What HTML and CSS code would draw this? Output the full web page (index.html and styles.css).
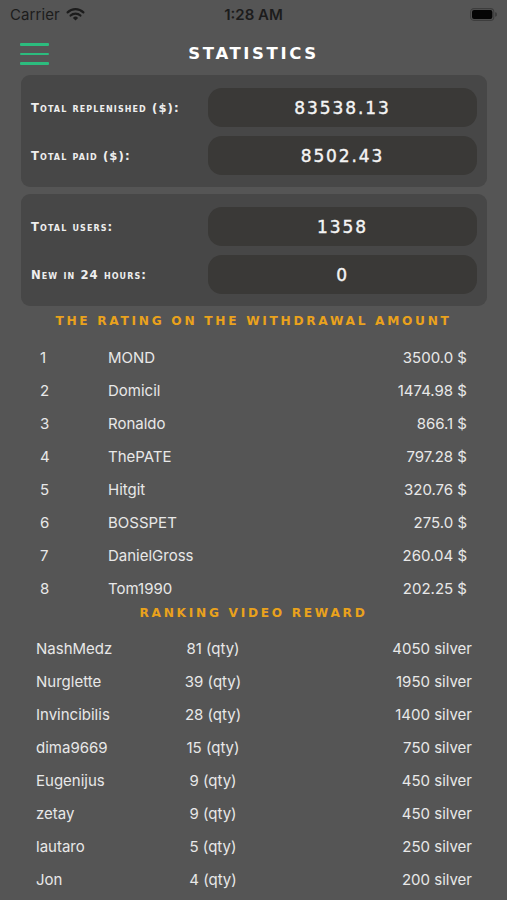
FILE: index.html
```html
<!DOCTYPE html>
<html>
<head>
<meta charset="utf-8">
<title>Statistics</title>
<link rel="stylesheet" href="styles.css">
</head>
<body>
<div class="screen">
  <div class="status">
    <div class="status-left">
      <span class="carrier">Carrier</span>
      <svg class="wifi" width="19" height="14" viewBox="0 0 19 14">
        <path d="M9.5 13.6 L6.9 10.9 A3.7 3.7 0 0 1 12.1 10.9 Z" fill="#1c1c1c"/>
        <path d="M4.6 8.6 A6.9 6.9 0 0 1 14.4 8.6" stroke="#1c1c1c" stroke-width="2.2" fill="none" stroke-linecap="round"/>
        <path d="M1.6 5.4 A11.2 11.2 0 0 1 17.4 5.4" stroke="#1c1c1c" stroke-width="2.2" fill="none" stroke-linecap="round"/>
      </svg>
    </div>
    <span class="time">1:28 AM</span>
    <div class="status-right">
      <svg class="battery" width="27" height="13" viewBox="0 0 27 13">
        <rect x="0.6" y="0.6" width="23.2" height="11.8" rx="3.4" fill="none" stroke="#3d3d3d" stroke-width="1.1"/>
        <rect x="2" y="2" width="20.4" height="9" rx="2" fill="#050505"/>
        <path d="M25 4.3 A2.2 2.2 0 0 1 25 8.7 Z" fill="#3d3d3d"/>
      </svg>
    </div>
  </div>

  <div class="nav">
    <div class="menu" aria-label="menu">
      <span></span><span></span><span></span>
    </div>
    <h1 class="title">STATISTICS</h1>
    <div class="nav-spacer"></div>
  </div>

  <div class="panel">
    <div class="stat-row">
      <span class="stat-label">Total replenished ($):</span>
      <div class="stat-value">83538.13</div>
    </div>
    <div class="stat-row">
      <span class="stat-label">Total paid ($):</span>
      <div class="stat-value">8502.43</div>
    </div>
  </div>

  <div class="panel">
    <div class="stat-row">
      <span class="stat-label">Total users:</span>
      <div class="stat-value">1358</div>
    </div>
    <div class="stat-row">
      <span class="stat-label">New in 24 hours:</span>
      <div class="stat-value">0</div>
    </div>
  </div>

  <h2 class="section-title first">THE RATING ON THE WITHDRAWAL AMOUNT</h2>
  <div class="list withdraw">
    <div class="row"><span>1</span><span>MOND</span><span class="amt">3500.0 $</span></div>
    <div class="row"><span>2</span><span>Domicil</span><span class="amt">1474.98 $</span></div>
    <div class="row"><span>3</span><span>Ronaldo</span><span class="amt">866.1 $</span></div>
    <div class="row"><span>4</span><span>ThePATE</span><span class="amt">797.28 $</span></div>
    <div class="row"><span>5</span><span>Hitgit</span><span class="amt">320.76 $</span></div>
    <div class="row"><span>6</span><span>BOSSPET</span><span class="amt">275.0 $</span></div>
    <div class="row"><span>7</span><span>DanielGross</span><span class="amt">260.04 $</span></div>
    <div class="row"><span>8</span><span>Tom1990</span><span class="amt">202.25 $</span></div>
  </div>

  <h2 class="section-title second">RANKING VIDEO REWARD</h2>
  <div class="list video">
    <div class="row"><span>NashMedz</span><span class="qty">81 (qty)</span><span class="amt">4050 silver</span></div>
    <div class="row"><span>Nurglette</span><span class="qty">39 (qty)</span><span class="amt">1950 silver</span></div>
    <div class="row"><span>Invincibilis</span><span class="qty">28 (qty)</span><span class="amt">1400 silver</span></div>
    <div class="row"><span>dima9669</span><span class="qty">15 (qty)</span><span class="amt">750 silver</span></div>
    <div class="row"><span>Eugenijus</span><span class="qty">9 (qty)</span><span class="amt">450 silver</span></div>
    <div class="row"><span>zetay</span><span class="qty">9 (qty)</span><span class="amt">450 silver</span></div>
    <div class="row"><span>lautaro</span><span class="qty">5 (qty)</span><span class="amt">250 silver</span></div>
    <div class="row"><span>Jon</span><span class="qty">4 (qty)</span><span class="amt">200 silver</span></div>
  </div>
</div>
</body>
</html>
```

FILE: styles.css
```css
* {
  box-sizing: border-box;
}

html, body {
  margin: 0;
  padding: 0;
  background: #555555;
}

.screen {
  width: 507px;
  height: 900px;
  overflow: hidden;
  background: #555555;
  font-family: Inter, "Liberation Sans", sans-serif;
}

/* status bar */
.status {
  height: 28px;
  display: grid;
  grid-template-columns: 1fr auto 1fr;
  align-items: center;
  padding: 0 10px 0 10px;
  color: #1c1c1c;
}

.status-left {
  display: flex;
  align-items: center;
  gap: 6px;
}

.carrier {
  font-size: 15px;
  font-weight: 400;
  letter-spacing: 0.1px;
}

.wifi {
  display: block;
  margin-top: -1px;
}

.time {
  font-size: 15px;
  font-weight: 600;
}

.status-right {
  display: flex;
  justify-content: flex-end;
}

.battery {
  display: block;
}

/* nav */
.nav {
  height: 47px;
  padding-top: 5px;
  display: grid;
  grid-template-columns: 1fr auto 1fr;
  align-items: center;
}

.menu {
  margin-left: 20px;
  width: 29px;
  display: flex;
  flex-direction: column;
  gap: 7px;
}

.menu span {
  display: block;
  height: 2.6px;
  border-radius: 1px;
  background: #2cbc7e;
}

.title {
  margin: 0;
  color: #ffffff;
  font-family: "DejaVu Sans", sans-serif;
  font-weight: 700;
  font-size: 16.5px;
  letter-spacing: 2.6px;
  line-height: 20px;
}

/* panels */
.panel {
  margin: 0 20px 7px 21px;
  width: 466px;
  background: #474747;
  border-radius: 9px;
  padding: 13px 10px 12px 10px;
  display: flex;
  flex-direction: column;
  gap: 9px;
}

.panel + .panel {
  margin-bottom: 0;
}

.stat-row {
  display: flex;
  align-items: center;
  justify-content: space-between;
  height: 39px;
}

.stat-label {
  color: #eeeeee;
  font-family: "DejaVu Sans", sans-serif;
  font-weight: 700;
  font-size: 11.6px;
  font-variant: small-caps;
  letter-spacing: 1.1px;
}

.stat-value {
  width: 269px;
  height: 39px;
  border-radius: 14px;
  background: #3a3937;
  color: #f4f4f4;
  display: flex;
  align-items: center;
  justify-content: center;
  font-family: "DejaVu Sans", sans-serif;
  font-size: 17px;
  letter-spacing: 1.9px;
  -webkit-text-stroke: 0.4px #f4f4f4;
}

/* section titles */
.section-title {
  margin: 0;
  text-align: center;
  color: #eaa21c;
  font-family: "DejaVu Sans", sans-serif;
  font-weight: 700;
  font-size: 12.2px;
  line-height: 16px;
  letter-spacing: 2.7px;
}

.section-title.first {
  padding: 7px 0 11.5px 0;
}

.section-title.second {
  padding: 0 0 11px 0;
}

/* lists */
.list {
  color: #e8e8e8;
  font-size: 15px;
}

.row {
  height: 33px;
  display: grid;
  align-items: center;
}

.withdraw .row {
  padding: 0 40px 0 40px;
  grid-template-columns: 68px 1fr auto;
}

.video .row {
  padding: 0 35px 0 36px;
  grid-template-columns: 120px 114px 1fr;
}

.qty {
  text-align: center;
}

.amt {
  text-align: right;
}
```
